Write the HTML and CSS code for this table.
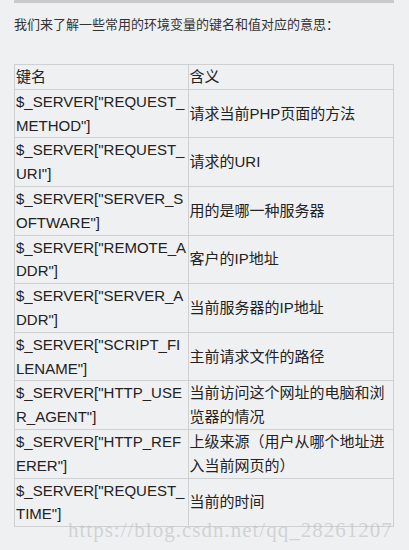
FILE: index.html
```html
<!DOCTYPE html>
<html lang="zh-CN">
<head>
  <meta charset="UTF-8" />
  <title>PHP 环境变量</title>
  <link rel="stylesheet" href="styles.css">
</head>
<body>
  <div class="page">
    <div class="top-bar"></div>

    <p class="intro">我们来了解一些常用的环境变量的键名和值对应的意思：</p>

    <table class="env-table">
      <thead>
        <tr>
          <th class="key">键名</th>
          <th>含义</th>
        </tr>
      </thead>
      <tbody>
        <tr>
          <td class="key">$_SERVER["REQUEST_METHOD"]</td>
          <td>请求当前PHP页面的方法</td>
        </tr>
        <tr>
          <td class="key">$_SERVER["REQUEST_URI"]</td>
          <td>请求的URI</td>
        </tr>
        <tr>
          <td class="key">$_SERVER["SERVER_SOFTWARE"]</td>
          <td>用的是哪一种服务器</td>
        </tr>
        <tr>
          <td class="key">$_SERVER["REMOTE_ADDR"]</td>
          <td>客户的IP地址</td>
        </tr>
        <tr>
          <td class="key">$_SERVER["SERVER_ADDR"]</td>
          <td>当前服务器的IP地址</td>
        </tr>
        <tr>
          <td class="key">$_SERVER["SCRIPT_FILENAME"]</td>
          <td>主前请求文件的路径</td>
        </tr>
        <tr>
          <td class="key">$_SERVER["HTTP_USER_AGENT"]</td>
          <td>当前访问这个网址的电脑和浏览器的情况</td>
        </tr>
        <tr>
          <td class="key">$_SERVER["HTTP_REFERER"]</td>
          <td>上级来源（用户从哪个地址进入当前网页的）</td>
        </tr>
        <tr>
          <td class="key">$_SERVER["REQUEST_TIME"]</td>
          <td>当前的时间</td>
        </tr>
      </tbody>
    </table>

    <!-- 水印 -->
    <div class="watermark">https://blog.csdn.net/qq_28261207</div>
  </div>
</body>
</html>
```

FILE: styles.css
```css
body {
  margin: 0;
  padding: 0;
  font-family: 'Liberation Sans', Arial, 'Noto Sans CJK SC', sans-serif;
  background-color: #eff0f2;
  color: #333;
}

.page {
  position: relative;
  width: 380px;
  margin-left: 14px;
  padding-bottom: 23px;
}

.top-bar {
  height: 3px;
  background-color: #c9cacc;
}

.intro {
  margin: 12px 0 29px;
  font-size: 13px;
  line-height: 20px;
  color: #333;
}

.env-table {
  width: 380px;
  border-collapse: collapse;
  table-layout: fixed;
  font-size: 15px;
  line-height: 23.8px;
  color: #222;
}

.env-table th,
.env-table td {
  border: 1px solid #cfd0d2;
  padding: 0 0 0 1px;
  text-align: left;
  font-weight: normal;
  vertical-align: middle;
  word-break: break-all;
}

.env-table .key {
  width: 171.5px;
}

/* 水印叠在表格底部 */
.watermark {
  position: absolute;
  left: 54px;
  top: 518px;
  font-family: 'Liberation Serif', 'Times New Roman', serif;
  font-size: 21px;
  letter-spacing: 1px;
  color: rgba(190, 190, 190, 0.6);
  white-space: nowrap;
}
```
